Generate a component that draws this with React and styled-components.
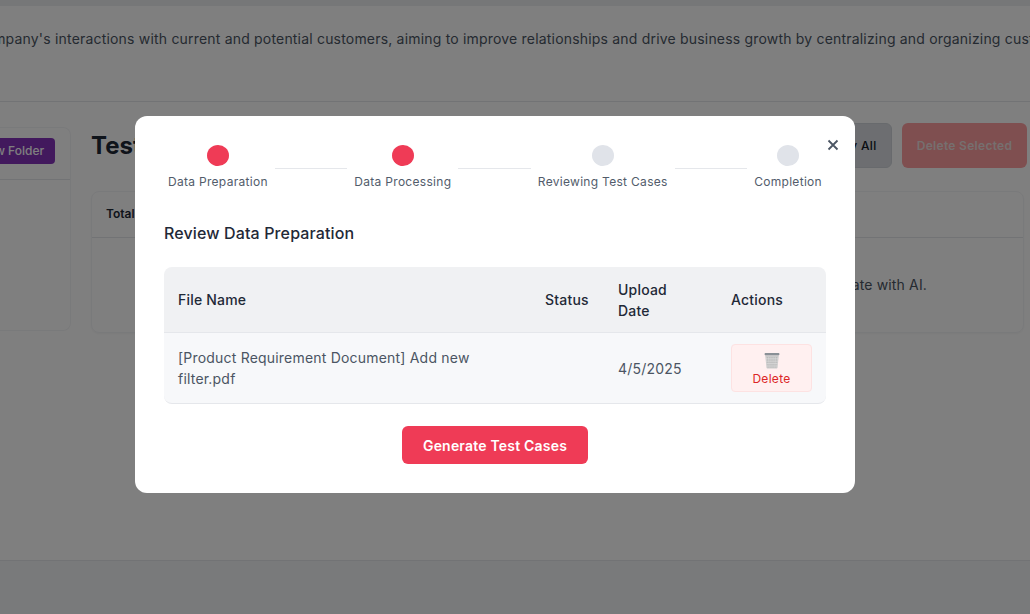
import {Fragment} from 'react'
import styled, {createGlobalStyle} from 'styled-components'

const GlobalStyle = createGlobalStyle`
  html,
  body {
    margin: 0;
    padding: 0;
    height: 100%;
    overflow: hidden;
    background: #ffffff;
    font-family: Inter, 'Liberation Sans', sans-serif;
  }
`

const Page = styled.div`
  width: 1030px;
  height: 614px;
  overflow: hidden;
  display: flex;
  flex-direction: column;
  background: #ffffff;
`

const TopStrip = styled.div`
  height: 6px;
  background: #eceef0;
`

const Intro = styled.div`
  height: 96px;
  border-bottom: 1px solid #e5e7eb;
  padding-top: 23px;
  box-sizing: border-box;
`

const IntroText = styled.p`
  margin: 0 0 0 -205px;
  font-size: 14px;
  line-height: 20px;
  letter-spacing: 0.19px;
  color: #4b5563;
  white-space: nowrap;
`

const Workspace = styled.div`
  flex: 1;
  display: flex;
  gap: 20px;
  padding-top: 21px;
`

const FolderPanel = styled.div`
  width: 71px;
  height: 204px;
  margin-top: 4px;
  box-sizing: border-box;
  border: 1px solid #f3f4f6;
  border-left: 0;
  border-radius: 0 8px 8px 0;
  overflow: hidden;
`

const FolderHead = styled.div`
  height: 52px;
  border-bottom: 1px solid #e5e7eb;
  display: flex;
  justify-content: flex-end;
  padding: 10px 15px 0 0;
  box-sizing: border-box;
`

const NewFolderButton = styled.div`
  flex: none;
  height: 26px;
  width: 76px;
  border-radius: 4px;
  background: #8432ba;
  color: #ffffff;
  font-size: 12px;
  font-weight: 500;
  line-height: 26px;
  text-align: right;
  white-space: nowrap;
  padding-right: 11px;
  box-sizing: border-box;
`

const TestPanel = styled.div`
  flex: 1;
  min-width: 0;
  padding-right: 3px;
`

const TestHeader = styled.div`
  display: flex;
  justify-content: space-between;
  align-items: center;
  height: 45px;
  margin-bottom: 23px;
`

const TestTitle = styled.h2`
  margin: 0;
  font-size: 24px;
  line-height: 32px;
  font-weight: 700;
  color: #1f2937;
`

const HeaderActions = styled.div`
  display: flex;
  gap: 10px;
`

const ActionButton = styled.div`
  height: 45px;
  box-sizing: border-box;
  border-radius: 6px;
  font-size: 12px;
  font-weight: ${props => (props.$danger ? 600 : 500)};
  letter-spacing: 0.3px;
  line-height: ${props => (props.$danger ? '45px' : '44px')};
  text-align: center;
  width: ${props => props.$width}px;
  padding-left: ${props => (props.$danger ? '0' : '4px')};
  color: ${props => (props.$danger ? '#ecdede' : '#111827')};
  background: ${props => (props.$danger ? '#ff9ea0' : '#dadde2')};
  border: ${props => (props.$danger ? '0' : '1px solid #d1d5db')};
`

const TestCard = styled.div`
  height: 140px;
  border: 1px solid #f3f4f6;
  border-radius: 8px;
  overflow: hidden;
  box-shadow: 0 1px 2px rgba(0, 0, 0, 0.04);
  margin-right: 3px;
`

const TestCardHead = styled.div`
  height: 46px;
  box-sizing: border-box;
  border-bottom: 1px solid #e5e7eb;
  padding: 14px;
  font-size: 12px;
  line-height: 16px;
  font-weight: 600;
  color: #1f2937;
`

const EmptyNote = styled.div`
  font-size: 14px;
  line-height: 20px;
  letter-spacing: 0.15px;
  color: #4b5563;
  text-align: right;
  padding: 37px 96px 0 0;
`

const Footer = styled.div`
  height: 53px;
  flex: none;
  background: #f3f4f6;
  border-top: 1px solid #e5e7eb;
`

const Overlay = styled.div`
  position: fixed;
  inset: 0;
  background: rgba(0, 0, 0, 0.5);
  display: flex;
  justify-content: center;
  align-items: flex-start;
  padding: 116px 40px 0 0;
  box-sizing: border-box;
`

const Modal = styled.div`
  position: relative;
  flex: none;
  width: 720px;
  height: 377px;
  box-sizing: border-box;
  background: #ffffff;
  border-radius: 12px;
  padding: 29px 29px 0;
`

const CloseButton = styled.button`
  position: absolute;
  top: 21px;
  right: 14px;
  width: 16px;
  height: 16px;
  padding: 0;
  border: 0;
  background: none;
  color: #4b5563;
  display: flex;
  align-items: center;
  justify-content: center;
`

const Stepper = styled.div`
  display: flex;
  align-items: flex-start;
  justify-content: space-between;
`

const Step = styled.div`
  display: flex;
  flex-direction: column;
  align-items: center;
  gap: 8px;
  padding: 0 4px;
  flex: none;
`

const StepDot = styled.span`
  width: 22px;
  height: 21px;
  border-radius: 50%;
  background: ${props => (props.$done ? '#ef3b56' : '#e0e3e9')};
`

const StepLabel = styled.span`
  font-size: 12px;
  line-height: 16px;
  letter-spacing: 0.3px;
  color: #525c6b;
  white-space: nowrap;
`

const StepLine = styled.span`
  flex: 1;
  height: 1px;
  margin: 23px 3px 0;
  background: #e5e7eb;
`

const SectionTitle = styled.h3`
  margin: 31px 0 22px;
  font-size: 16px;
  line-height: 24px;
  letter-spacing: 0.13px;
  font-weight: 500;
  color: #1f2937;
`

const FileTable = styled.table`
  width: 662px;
  border-collapse: separate;
  border-spacing: 0;
  table-layout: fixed;
  font-size: 14px;
  line-height: 21px;
  letter-spacing: 0.2px;
`

const TableColumn = styled.col`
  width: ${props => props.$width};
`

const HeadCell = styled.th`
  height: 66px;
  box-sizing: border-box;
  padding: 0 14px;
  background: #f0f1f3;
  border-bottom: 1px solid #e5e7eb;
  color: #1f2937;
  font-weight: 500;
  text-align: left;

  &:first-child {
    border-top-left-radius: 8px;
  }

  &:last-child {
    border-top-right-radius: 8px;
  }
`

const BodyCell = styled.td`
  height: 71px;
  box-sizing: border-box;
  padding: 0 14px;
  background: #f7f8fa;
  border-bottom: 1px solid #e5e7eb;
  color: #4b5563;

  &:first-child {
    border-bottom-left-radius: 8px;
  }

  &:last-child {
    border-bottom-right-radius: 8px;
  }
`

const DeleteButton = styled.button`
  width: 81px;
  height: 48px;
  box-sizing: border-box;
  display: flex;
  flex-direction: column;
  align-items: center;
  gap: 2px;
  padding: 7px 0 0;
  background: #fff0f0;
  border: 1px solid #fde2e2;
  border-radius: 4px;
  color: #dc2626;
  font-family: inherit;
  font-size: 12px;
  letter-spacing: 0.3px;
  line-height: 16px;
`

const GenerateRow = styled.div`
  display: flex;
  justify-content: center;
  margin-top: 22px;
`

const GenerateButton = styled.button`
  width: 186px;
  height: 38px;
  border: 0;
  border-radius: 6px;
  background: #ef3b56;
  color: #ffffff;
  font-family: inherit;
  font-size: 14px;
  font-weight: 600;
  letter-spacing: 0.2px;
`

const TrashIcon = () => (
  <svg width="16" height="17" viewBox="0 0 16 17">
    <path d="M1.2 3.2h13.6l-1.3 12.6c0 .5-.4.8-.9.8H3.4c-.5 0-.9-.3-.9-.8z" fill="#cbcbcb" />
    <path d="M3.4 5l.8 10.6M5.8 5l.4 10.6M8 5v10.6M10.2 5l-.4 10.6M12.6 5l-.8 10.6" stroke="#adadad" strokeWidth=".6" />
    <path d="M2 6.8h12M2.2 9.2h11.6M2.4 11.6h11.2M2.6 14h10.8" stroke="#e0e0e0" strokeWidth=".6" />
    <rect x=".6" y="1" width="14.8" height="2.2" rx=".8" fill="#8a9096" />
  </svg>
)

const CloseIcon = () => (
  <svg width="12" height="12" viewBox="0 0 12 12" fill="none" stroke="currentColor" strokeWidth="1.8">
    <path d="M1.5 1.5l9 9M10.5 1.5l-9 9" />
  </svg>
)

const steps = [
  {label: 'Data Preparation', done: true},
  {label: 'Data Processing', done: true},
  {label: 'Reviewing Test Cases', done: false},
  {label: 'Completion', done: false},
]

const App = () => (
  <>
    <GlobalStyle />
    <Page>
      <TopStrip />
      <Intro>
        <IntroText>
          A CRM system manages a company's interactions with current and potential customers, aiming to improve relationships and drive business growth by centralizing and organizing customer data.
        </IntroText>
      </Intro>
      <Workspace>
        <FolderPanel>
          <FolderHead>
            <NewFolderButton>New Folder</NewFolderButton>
          </FolderHead>
        </FolderPanel>
        <TestPanel>
          <TestHeader>
            <TestTitle>Test Cases</TestTitle>
            <HeaderActions>
              <ActionButton $width={90}>Verify All</ActionButton>
              <ActionButton $width={125} $danger>
                Delete Selected
              </ActionButton>
            </HeaderActions>
          </TestHeader>
          <TestCard>
            <TestCardHead>Total</TestCardHead>
            <EmptyNote>No test cases yet. Generate with AI.</EmptyNote>
          </TestCard>
        </TestPanel>
      </Workspace>
      <Footer />
    </Page>
    <Overlay>
      <Modal>
        <CloseButton type="button" aria-label="Close">
          <CloseIcon />
        </CloseButton>
        <Stepper>
          {steps.map((step, index) => (
            <Fragment key={step.label}>
              {index > 0 && <StepLine />}
              <Step>
                <StepDot $done={step.done} />
                <StepLabel>{step.label}</StepLabel>
              </Step>
            </Fragment>
          ))}
        </Stepper>
        <SectionTitle>Review Data Preparation</SectionTitle>
        <FileTable>
          <colgroup>
            <TableColumn $width="367px" />
            <TableColumn $width="73px" />
            <TableColumn $width="113px" />
            <TableColumn $width="auto" />
          </colgroup>
          <thead>
            <tr>
              <HeadCell>File Name</HeadCell>
              <HeadCell>Status</HeadCell>
              <HeadCell>
                Upload
                <br />
                Date
              </HeadCell>
              <HeadCell>Actions</HeadCell>
            </tr>
          </thead>
          <tbody>
            <tr>
              <BodyCell>[Product Requirement Document] Add new filter.pdf</BodyCell>
              <BodyCell />
              <BodyCell>4/5/2025</BodyCell>
              <BodyCell>
                <DeleteButton type="button">
                  <TrashIcon />
                  Delete
                </DeleteButton>
              </BodyCell>
            </tr>
          </tbody>
        </FileTable>
        <GenerateRow>
          <GenerateButton type="button">Generate Test Cases</GenerateButton>
        </GenerateRow>
      </Modal>
    </Overlay>
  </>
)

export default App
